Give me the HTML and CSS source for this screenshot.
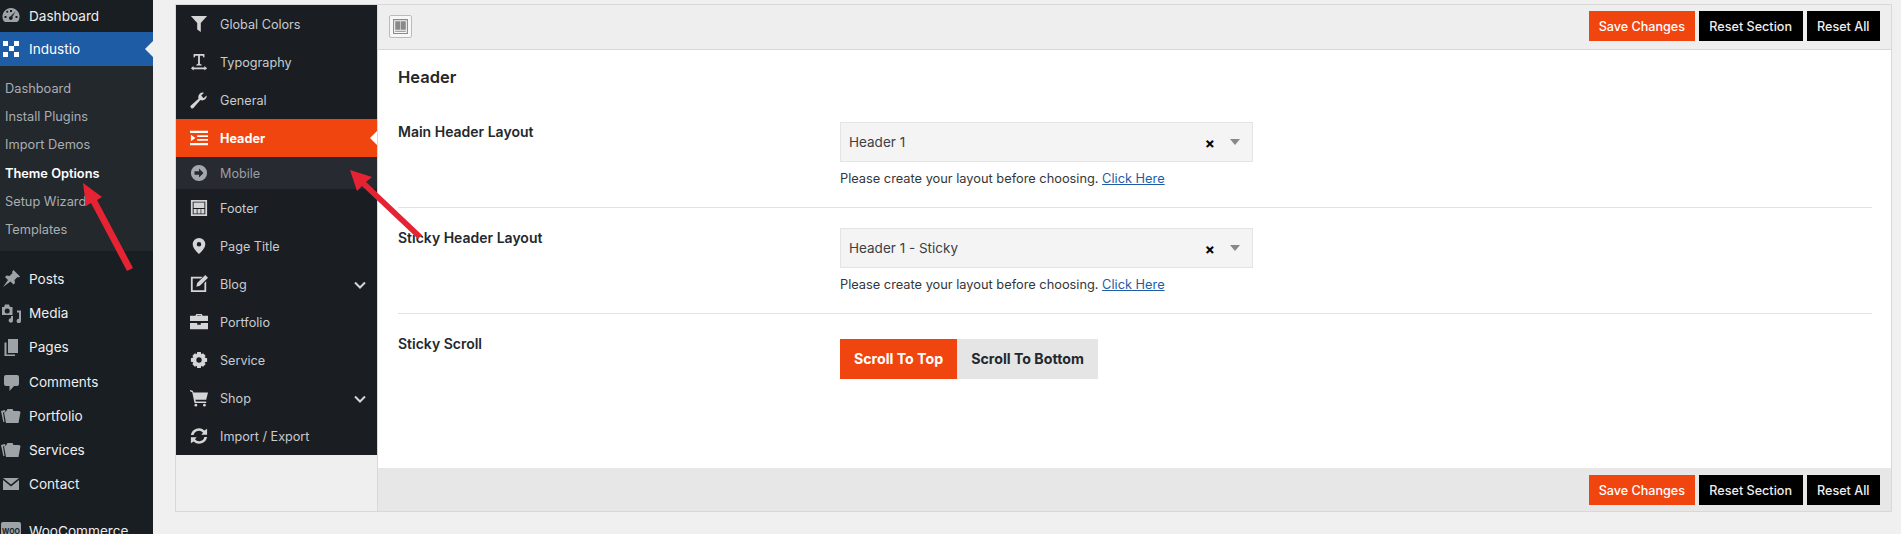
FILE: index.html
```html
<!DOCTYPE html>
<html lang="en">
<head>
  <meta charset="UTF-8">
  <title>Theme Options</title>
  <link rel="stylesheet" href="styles.css">
</head>
<body>
  <div class="page">
    <!-- wp admin menu -->
    <aside class="admin-menu">
      <a class="admin-item first"><svg class="admin-icon" viewBox="0 0 20 20"><path fill-rule="evenodd" d="M10 2a8.500 8.500 0 0 0-8 11.500c.5 1.500 1 2 2 2.500h12c1-.5 1.500-1 2-2.500A8.500 8.500 0 0 0 10 2zM9 4h2v2H9zM5 5.500l1.500-1 1 1.500-1.500 1zM14.500 5.500l-3.200 5.600a1.800 1.800 0 1 1-1.600-.8zM3.500 10h2v2h-2zM14.500 10h2v2h-2z"/></svg>Dashboard</a>
      <a class="admin-item active"><svg class="admin-icon" viewBox="0 0 20 20"><path class="white" d="M2 2h5v5H2zM13 2h5v5h-5zM8 7h5v5H8zM2 13h5v5H2zM13 13h5v5h-5z"/></svg>Industio</a>
      <div class="submenu">
        <a>Dashboard</a>
        <a>Install Plugins</a>
        <a>Import Demos</a>
        <a class="current">Theme Options</a>
        <a>Setup Wizard</a>
        <a>Templates</a>
      </div>
      <div class="admin-group">
        <a class="admin-item"><svg class="admin-icon" viewBox="0 0 20 20"><path d="M12.500 1l6.500 6.500-1.500 1-1-.5-3 3 .5 3-1.500 1.500-3-3L2 18l5-7-3-3L5.500 6.500l3 .5 3-3-.5-1z"/></svg>Posts</a>
        <a class="admin-item"><svg class="admin-icon" viewBox="0 0 20 20"><path fill-rule="evenodd" d="M1 4h2l1-2.500h4L9 4h2.500v8H1zM6.200 5.500a2.500 2.500 0 1 0 0 5 2.500 2.500 0 0 0 0-5z"/><path d="M16 7.500h4v10.500a2.200 2.200 0 1 1-2-2.200V9.500h-2zM12 13v4.500a2.200 2.200 0 1 1-2-2.200V13z"/></svg>Media</a>
        <a class="admin-item"><svg class="admin-icon" viewBox="0 0 20 20"><path d="M7 2h10v14H7z"/><path d="M3.500 5.500H5.500v12H14V19H3.500z"/></svg>Pages</a>
        <a class="admin-item"><svg class="admin-icon" viewBox="0 0 20 20"><path d="M5 3h11a2 2 0 0 1 2 2v7a2 2 0 0 1-2 2h-3l-4.500 5v-5H5a2 2 0 0 1-2-2V5a2 2 0 0 1 2-2z"/></svg>Comments</a>
        <a class="admin-item"><svg class="admin-icon" viewBox="0 0 20 20"><path d="M0 5l4-1 .5 1.500L2 6.500l1.500 9.500h-1.200z"/><path d="M5 5.500l1.500-2.500h5l1 2h5.500l1.500 1-2 11H5l-2-10.500z"/></svg>Portfolio</a>
        <a class="admin-item"><svg class="admin-icon" viewBox="0 0 20 20"><path d="M0 5l4-1 .5 1.500L2 6.500l1.500 9.500h-1.200z"/><path d="M5 5.500l1.500-2.500h5l1 2h5.500l1.500 1-2 11H5l-2-10.500z"/></svg>Services</a>
        <a class="admin-item"><svg class="admin-icon" viewBox="0 0 20 20"><path d="M2 4h16l-8 6.500z"/><path d="M2 6l8 6.500L18 6v10H2z"/></svg>Contact</a>
        <a class="admin-item woo"><svg class="admin-icon" viewBox="0 0 20 20"><rect x="0" y="1" width="20" height="18" rx="2"/><text x="10" y="13" class="woo-mark">WOO</text></svg>WooCommerce</a>
      </div>
    </aside>

    <div class="content">
      <div class="panel">
        <!-- options nav -->
        <nav class="opt-nav">
          <ul>
            <li><svg viewBox="0 0 20 20"><path d="M1 1h18l-7 8v10l-4-3V9z"/></svg>Global Colors</li>
            <li><svg viewBox="0 0 20 20"><path d="M4 1h12v4h-1l-1-2h-3v9l2 1v1H7v-1l2-1V3H6L5 5H4zM1 17l3-2.500V16h12v-1.500l3 2.500-3 2.500V18H4v1.500z"/></svg>Typography</li>
            <li><svg viewBox="0 0 20 20"><path d="M18.500 5a5 5 0 0 1-7 5l-7.500 8.500a1.800 1.800 0 0 1-3-2.500L9.500 8.500a5 5 0 0 1 6-6.500L12.500 5l2.500 3z"/></svg>General</li>
            <li class="on"><svg viewBox="0 0 20 20"><path d="M0 2h20v2.500H0zM8 7h12v2H8zM8 11h12v2H8zM0 15.500h20V18H0zM1 6.500L6 10l-5 3.500z"/></svg>Header</li>
            <li class="sub"><svg viewBox="0 0 20 20"><path fill-rule="evenodd" d="M10 1a9 9 0 1 0 0 18 9 9 0 0 0 0-18zM10 5l5 5-5 5v-3H5V8h5z"/></svg>Mobile</li>
            <li><svg viewBox="0 0 20 20"><path fill-rule="evenodd" d="M1 1h18v18H1zM3 3v14h14V3zM4 4h12v6H4zM4 11h3.500v5H4zM8.300 11h3.500v5H8.300zM12.500 11H16v5h-3.500z"/></svg>Footer</li>
            <li><svg viewBox="0 0 20 20"><path fill-rule="evenodd" d="M10 1a7 7 0 0 0-7 7c0 4 4 8 7 11 3-3 7-7 7-11a7 7 0 0 0-7-7zM10 5.500a2.500 2.500 0 1 1 0 5 2.500 2.500 0 0 1 0-5z"/></svg>Page Title</li>
            <li><svg viewBox="0 0 20 20"><path d="M1 2h13l-2 2H3v13h13V9l2-2v12H1z"/><path d="M17 0l3 3-9 9-4 1 1-4z"/></svg>Blog<svg class="chev" viewBox="0 0 12 8"><path d="M1 1.500l5 5 5-5"/></svg></li>
            <li><svg viewBox="0 0 20 20"><path fill-rule="evenodd" d="M6 3l1-2h6l1 2h6v6H0V3zM8 2.500L7.500 3h5l-.500-.5zM0 11h8v2h4v-2h8v7H0z"/></svg>Portfolio</li>
            <li><svg viewBox="0 0 20 20"><path fill-rule="evenodd" d="M8 1h4l.5 2.500 2-1 2.800 2.800-1 2 2.700.7v4l-2.700.5 1 2.200-2.800 2.800-2-1.200L12 19H8l-.5-2.700-2 1.200-2.800-2.800 1-2.200L1 12V8l2.700-.7-1-2 2.800-2.800 2 1zM10 7a3 3 0 1 0 0 6 3 3 0 0 0 0-6z"/></svg>Service</li>
            <li><svg viewBox="0 0 20 20"><path d="M0 1l3 1 1 2h16l-2 8H6l.5 2H18v1.500H5L2.500 3.500 0 2.500z"/><circle cx="6.500" cy="18" r="1.500"/><circle cx="16" cy="18" r="1.500"/></svg>Shop<svg class="chev" viewBox="0 0 12 8"><path d="M1 1.500l5 5 5-5"/></svg></li>
            <li><svg viewBox="0 0 20 20"><path d="M1 9a9 9 0 0 1 15-5l3-2v6.500h-6.500l2-2A6 6 0 0 0 4 9zM19 11a9 9 0 0 1-15 5l-3 2v-6.500h6.500l-2 2A6 6 0 0 0 16 11z"/></svg>Import / Export</li>
          </ul>
        </nav>

        <div class="opt-main">
          <div class="bar top-bar">
            <span class="layout-toggle"><svg viewBox="0 0 16 16"><path fill-rule="evenodd" d="M1 1h14v14H1zM2 2v12h12V2zM3 3h4.800v8H3zM8.300 3H13v8H8.300zM3 12h10v1H3z"/></svg></span>
            <div class="bar-btns">
              <button class="btn save">Save Changes</button>
              <button class="btn">Reset Section</button>
              <button class="btn">Reset All</button>
            </div>
          </div>

          <div class="opt-body">
            <h2>Header</h2>
            <div class="field">
              <label>Main Header Layout</label>
              <div class="control">
                <div class="select"><span>Header 1</span><b class="clear">×</b><i class="caret"></i></div>
                <p>Please create your layout before choosing. <a>Click Here</a></p>
              </div>
            </div>
            <div class="field">
              <label>Sticky Header Layout</label>
              <div class="control">
                <div class="select"><span>Header 1 - Sticky</span><b class="clear">×</b><i class="caret"></i></div>
                <p>Please create your layout before choosing. <a>Click Here</a></p>
              </div>
            </div>
            <div class="field last-field">
              <label>Sticky Scroll</label>
              <div class="control">
                <div class="toggle">
                  <span class="toggle-on">Scroll To Top</span>
                  <span class="toggle-off">Scroll To Bottom</span>
                </div>
              </div>
            </div>
          </div>

          <div class="bar bottom-bar">
            <div class="bar-btns">
              <button class="btn save">Save Changes</button>
              <button class="btn">Reset Section</button>
              <button class="btn">Reset All</button>
            </div>
          </div>
        </div>
      </div>
    </div>

    <!-- annotation arrows drawn over the screenshot -->
    <svg class="arrows" viewBox="0 0 1901 534">
      <path d="M83 183L102 197 97 200 133 268 127 271 91 203 86 206z"/>
      <path d="M350 170L372 177 366 182 422 235 418 239 362 186 357 191z"/>
    </svg>
  </div>
</body>
</html>
```

FILE: styles.css
```css
* {
  box-sizing: border-box;
}
body {
  margin: 0;
  font-family: Inter, "Liberation Sans", sans-serif;
  font-size: 12.8px;
  background: #f0f0f0;
}
.page {
  display: flex;
  height: 100vh;
  overflow: hidden;
  position: relative;
}
.arrows {
  position: absolute;
  top: 0;
  left: 0;
  width: 1901px;
  height: 534px;
  pointer-events: none;
}
.arrows path {
  fill: #e62333;
}

/* admin menu */
.admin-menu {
  width: 153px;
  flex: none;
  background: #191e23;
  color: #eee;
  font-size: 13.6px;
}
.admin-item {
  display: flex;
  align-items: center;
  height: 34.2px;
  padding-left: 1px;
}
.admin-item.first {
  height: 32px;
}
.admin-item.active {
  height: 34px;
}
.admin-icon {
  width: 20px;
  height: 20px;
  margin-right: 8px;
  fill: #9ea3a8;
  flex: none;
}
.admin-icon .white {
  fill: #fff;
}
.woo-mark {
  font-size: 7px;
  font-weight: 700;
  text-anchor: middle;
  fill: #191e23;
}
.admin-item.active {
  background: #1e5ca5;
  color: #fff;
  position: relative;
}
.admin-item.active::after {
  content: "";
  position: absolute;
  right: 0;
  top: 9px;
  border: 8px solid transparent;
  border-right-color: #f0f0f0;
  border-left: 0;
}
.submenu {
  background: #23282d;
  height: 185px;
  padding-top: 9px;
  color: #a9aeb3;
  font-size: 12.8px;
}
.submenu a {
  display: block;
  height: 28.2px;
  line-height: 27px;
  padding-left: 5px;
}
.submenu .current {
  color: #fff;
  font-weight: 600;
}
.admin-group {
  padding-top: 11px;
}
.admin-item.woo {
  margin-top: 13px;
}

/* options panel */
.content {
  flex: 1;
  padding: 4px 9px 22px 22px;
}
.panel {
  display: flex;
  height: 100%;
  border: 1px solid #d8d8d8;
  background: #efefef;
}
.opt-nav {
  width: 202px;
  flex: none;
  border-right: 1px solid #d8d8d8;
}
.opt-nav ul {
  list-style: none;
  margin: 0;
  padding: 0;
  background: #1a1e23;
  color: #c9cbcd;
  font-size: 12.65px;
}
.opt-nav li {
  display: flex;
  align-items: center;
  height: 38px;
  padding-left: 14px;
  position: relative;
}
.opt-nav li > svg:first-child {
  width: 18px;
  height: 18px;
  margin-right: 12px;
  fill: #d4d5d6;
  flex: none;
}
.opt-nav .on {
  background: #f0450f;
  color: #fff;
  font-weight: 700;
}
.opt-nav .on > svg:first-child {
  fill: #fff;
}
.opt-nav .on::after {
  content: "";
  position: absolute;
  right: 0;
  top: 12px;
  border: 7px solid transparent;
  border-right-color: #fff;
  border-left: 0;
}
.opt-nav .sub {
  height: 32px;
  background: #272b31;
  color: #9b9ea2;
}
.opt-nav .sub > svg:first-child {
  fill: #a4a7ab;
}
.chev {
  width: 12px;
  height: 8px;
  position: absolute;
  right: 11px;
  top: 16px;
  fill: none;
  stroke: #d4d5d6;
  stroke-width: 2;
}

.opt-main {
  flex: 1;
  display: flex;
  flex-direction: column;
  background: #fff;
}
.bar {
  display: flex;
  align-items: center;
  justify-content: space-between;
  padding: 0 11px;
}
.top-bar {
  height: 45px;
  padding-bottom: 2px;
  background: #eee;
  border-bottom: 1px solid #d8d8d8;
}
.bottom-bar {
  height: 43px;
  padding-top: 1px;
  background: #e7e7e7;
  justify-content: flex-end;
}
.layout-toggle {
  width: 23px;
  height: 23px;
  border: 1px solid #bbb;
  border-radius: 2px;
  background: #f7f7f7;
  padding: 2px;
  display: flex;
}
.layout-toggle svg {
  fill: #8a8a8a;
}
.bar-btns {
  display: flex;
  gap: 4px;
}
.btn {
  height: 30px;
  padding: 0 10.5px;
  border: 0;
  background: #000;
  color: #eee;
  font-family: inherit;
  font-size: 12.6px;
  font-weight: 500;
}
.btn.save {
  width: 106px;
  padding: 0;
  background: #f0450f;
  color: #fff;
}

.opt-body {
  flex: 1;
  padding: 0 19px 0 20px;
  color: #23282d;
}
.opt-body h2 {
  margin: 0;
  padding-top: 16px;
  height: 52px;
  font-size: 16.5px;
  line-height: 22px;
  font-weight: 600;
}
.field {
  display: flex;
  padding-top: 20px;
  height: 106px;
  border-bottom: 1px solid #e2e2e2;
}
.field label {
  width: 442px;
  flex: none;
  padding-top: 1px;
  font-size: 14px;
  font-weight: 600;
  line-height: 18px;
}
.last-field {
  height: auto;
  border: 0;
  padding-top: 25px;
}
.last-field label {
  margin-top: -5px;
}
.select {
  display: flex;
  align-items: center;
  width: 413px;
  height: 40px;
  padding-left: 8px;
  background: #f4f4f4;
  border: 1px solid #e4e4e4;
  font-size: 13.5px;
  color: #3c4045;
}
.select span {
  flex: 1;
}
.clear {
  font-size: 15px;
  color: #000;
  margin-right: 15px;
  margin-top: 3px;
}
.caret {
  margin-right: 12px;
  border: 5px solid transparent;
  border-top: 6px solid #888;
  border-bottom: 0;
}
.control p {
  margin: 9px 0 0;
  line-height: 16px;
  color: #32373c;
}
.control p a {
  color: #1e5ca5;
  text-decoration: underline;
}
.toggle {
  display: flex;
  height: 40px;
  line-height: 40px;
  font-size: 14.2px;
  font-weight: 700;
}
.toggle-on {
  width: 117px;
  text-align: center;
  background: #f0450f;
  color: #fff;
}
.toggle-off {
  width: 141px;
  text-align: center;
  background: #e6e5e6;
  color: #23282d;
}
```
